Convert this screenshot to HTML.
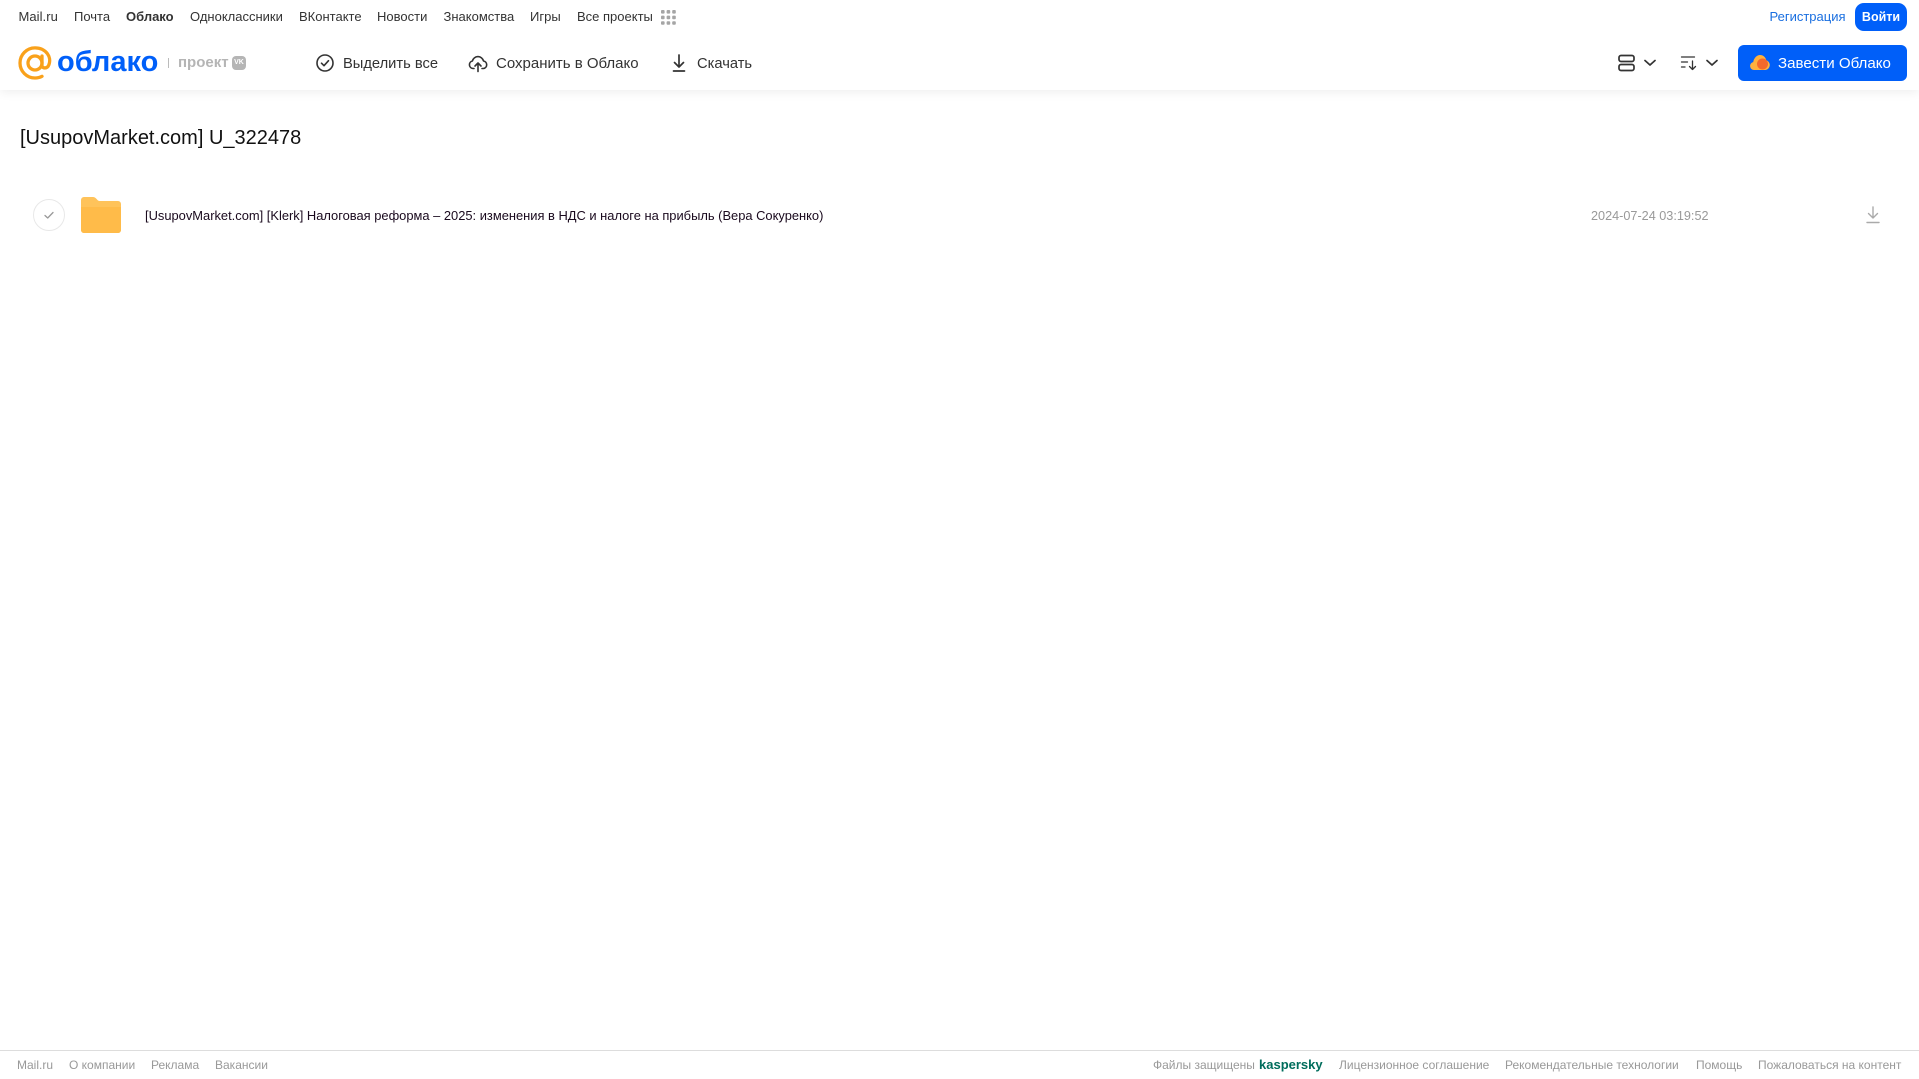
<!DOCTYPE html>
<html lang="ru"><head><meta charset="utf-8"><title>Облако</title>
<style>
html,body{margin:0;padding:0;background:#fff}
body{width:1919px;height:1079px;position:relative;overflow:hidden;font-family:"Liberation Sans",Arial,sans-serif}
.t{position:absolute;white-space:nowrap;line-height:16px;transform-origin:0 50%}
.n{top:9px;font-size:13px;color:#333}
.a{top:54.500px;font-size:14.700px;line-height:18px;color:#333}
.f{top:1057px;font-size:12px;color:#999}
svg{position:absolute;display:block}
</style></head><body>
<div style="position:absolute;left:0;top:0;width:1919px;height:90px;background:#fff;box-shadow:0 2px 10px rgba(0,0,0,.07)"></div>

<span class="t n" style="left:18.500px;letter-spacing:.05px">Mail.ru</span>
<span class="t n" style="left:74px">Почта</span>
<span class="t n" style="left:126px;font-weight:bold">Облако</span>
<span class="t n" style="left:190px">Одноклассники</span>
<span class="t n" style="left:299px">ВКонтакте</span>
<span class="t n" style="left:377px">Новости</span>
<span class="t n" style="left:443.500px">Знакомства</span>
<span class="t n" style="left:530px">Игры</span>
<span class="t n" style="left:577px">Все проекты</span>
<svg style="left:661px;top:10px" width="15" height="15" fill="#a5a5a5"><rect x="0" y="0" width="3.600" height="3.600" rx="1"/><rect x="5.600" y="0" width="3.600" height="3.600" rx="1"/><rect x="11.200" y="0" width="3.600" height="3.600" rx="1"/><rect x="0" y="5.600" width="3.600" height="3.600" rx="1"/><rect x="5.600" y="5.600" width="3.600" height="3.600" rx="1"/><rect x="11.200" y="5.600" width="3.600" height="3.600" rx="1"/><rect x="0" y="11.200" width="3.600" height="3.600" rx="1"/><rect x="5.600" y="11.200" width="3.600" height="3.600" rx="1"/><rect x="11.200" y="11.200" width="3.600" height="3.600" rx="1"/></svg>

<span class="t n" style="left:1769.500px;color:#1a6fe0">Регистрация</span>
<div style="position:absolute;left:1855px;top:3px;width:52px;height:28px;border-radius:9px;background:#005ff9;color:#fff;font-size:12.500px;font-weight:bold;line-height:28px;text-align:center">Войти</div>

<svg style="left:18px;top:46px" width="34" height="34" viewBox="0 0 34 34" fill="none" stroke="#f9a11b" stroke-width="3.300"><circle cx="17" cy="17" r="7"/><path d="M24 10v9.500c0 3.200 5.200 3.500 6.800-.5 1.700-4.300.7-8.500-1.300-11.200C26.400 3.700 21.700 1.900 17 1.900 8.700 1.900 2 8.700 2 17s6.700 15 15 15c2.800 0 5-.6 7-1.700" stroke-linecap="round"/></svg>
<span class="t" style="left:57px;top:44px;font-size:29px;line-height:36px;font-weight:bold;color:#005ff9">облако</span>
<div style="position:absolute;left:168px;top:58px;width:1px;height:10px;background:#bbb"></div>
<span class="t" style="left:178px;top:54px;font-size:15px;line-height:18px;font-weight:bold;color:#b5b5b5">проект</span>
<div style="position:absolute;left:232px;top:56px;width:14px;height:14px;border-radius:4px;background:#b5b5b5;color:#fff;font-size:7px;font-weight:bold;line-height:14px;text-align:center">VK</div>

<svg style="left:315px;top:53px" width="20" height="20" viewBox="0 0 20 20" fill="none" stroke="#333" stroke-width="1.600"><circle cx="10" cy="10" r="8"/><path d="M6.500 10.200l2.500 2.500 4.500-5" stroke-linecap="round" stroke-linejoin="round"/></svg>
<span class="t a" style="left:343px">Выделить все</span>
<svg style="left:468px;top:53px" width="20" height="20" viewBox="0 0 20 20" fill="none" stroke="#333" stroke-width="1.600" stroke-linecap="round" stroke-linejoin="round"><path d="M6 15.500H5a3.800 3.800 0 0 1-.6-7.500A5.700 5.700 0 0 1 15.500 8a3.800 3.800 0 0 1 0 7.500H14"/><path d="M10 18.500v-8M7 13l3-3 3 3"/></svg>
<span class="t a" style="left:496px;font-size:15px">Сохранить в Облако</span>
<svg style="left:669px;top:53px" width="20" height="20" viewBox="0 0 20 20" fill="none" stroke="#333" stroke-width="1.700" stroke-linecap="round" stroke-linejoin="round"><path d="M10 2v12M5.500 9.500L10 14l4.500-4.500M4.500 18h11"/></svg>
<span class="t a" style="left:697px">Скачать</span>

<svg style="left:1617px;top:53px" width="20" height="20" viewBox="0 0 20 20" fill="none" stroke="#333" stroke-width="1.700"><rect x="2" y="2.500" width="15" height="6" rx="2"/><rect x="2" y="11.500" width="15" height="6" rx="2"/></svg>
<svg style="left:1643px;top:58px" width="14" height="10" viewBox="0 0 14 10" fill="none" stroke="#333" stroke-width="1.700" stroke-linecap="round" stroke-linejoin="round"><path d="M2 2.500l5 4.500 5-4.500"/></svg>
<svg style="left:1680px;top:53px" width="20" height="20" viewBox="0 0 20 20" fill="none" stroke="#333" stroke-width="1.300" stroke-linecap="round" stroke-linejoin="round"><path d="M1.500 4h13M1.500 9h6M1.500 14h3.500M12.500 8v8.500M9.500 13.500l3 3 3-3"/></svg>
<svg style="left:1705px;top:58px" width="14" height="10" viewBox="0 0 14 10" fill="none" stroke="#333" stroke-width="1.700" stroke-linecap="round" stroke-linejoin="round"><path d="M2 2.500l5 4.500 5-4.500"/></svg>

<div style="position:absolute;left:1738px;top:45px;width:169px;height:36px;border-radius:6px;background:#005ff9"></div>
<svg style="left:1749px;top:53px" width="22" height="20" viewBox="0 0 22 20"><path d="M5 17a4 4 0 0 1-.8-7.900C5 4.800 8 2 11 2c3.300 0 5.500 2.200 6.300 5.300A5 5 0 0 1 16.500 17z" fill="#ffb13d"/><circle cx="13.500" cy="11" r="5.500" fill="#f4692c"/></svg>
<span class="t a" style="left:1778px;color:#fff;font-size:15.100px">Завести Облако</span>

<span class="t" style="left:20px;top:125px;font-size:20px;line-height:27px;color:#111">[UsupovMarket.com] U_322478</span>

<div style="position:absolute;left:33px;top:199px;width:30px;height:30px;border:1px solid #e8e8e8;border-radius:50%;background:#fff"></div>
<svg style="left:42px;top:208px" width="14" height="14" viewBox="0 0 14 14" fill="none" stroke="#999" stroke-width="1.300" stroke-linecap="round" stroke-linejoin="round"><path d="M3 7.500l2.700 2.500L11 4.500"/></svg>
<svg style="left:81px;top:197px" width="40" height="36" viewBox="0 0 41 36" preserveAspectRatio="none"><path d="M0 3a3 3 0 0 1 3-3h9c2 0 3 1 4 2s1.500 2 3.500 2H38a3 3 0 0 1 3 3v26a3 3 0 0 1-3 3H3a3 3 0 0 1-3-3z" fill="#ffc35a"/><path d="M0 10h41v23a3 3 0 0 1-3 3H3a3 3 0 0 1-3-3z" fill="#ffbb49"/></svg>

<span class="t" style="left:145px;top:207.500px;font-size:12.900px;color:#1a0a1e">[UsupovMarket.com] [Klerk] Налоговая реформа – 2025: изменения в НДС и налоге на прибыль (Вера Сокуренко)</span>
<span class="t" style="left:1591px;top:207.500px;font-size:12.660px;color:#999">2024-07-24 03:19:52</span>
<svg style="left:1865px;top:205px" width="16" height="20" viewBox="0 0 16 20" fill="none" stroke="#aaa" stroke-width="1.400" stroke-linecap="round" stroke-linejoin="round"><path d="M8 2v11M3.500 8.500L8 13l4.500-4.500M2 17.500h12"/></svg>

<div style="position:absolute;left:0;top:1050px;width:1919px;height:1px;background:#ddd"></div>
<span class="t f" style="left:17px">Mail.ru</span>
<span class="t f" style="left:69px">О компании</span>
<span class="t f" style="left:151px">Реклама</span>
<span class="t f" style="left:215px">Вакансии</span>
<span class="t f" style="left:1153px">Файлы защищены</span>
<span class="t f" style="left:1259px;font-weight:bold;color:#006d5c;font-size:13px">kaspersky</span>
<span class="t f" style="left:1339px">Лицензионное соглашение</span>
<span class="t f" style="left:1505px">Рекомендательные технологии</span>
<span class="t f" style="left:1696px">Помощь</span>
<span class="t f" style="left:1758px">Пожаловаться на контент</span>
</body></html>
